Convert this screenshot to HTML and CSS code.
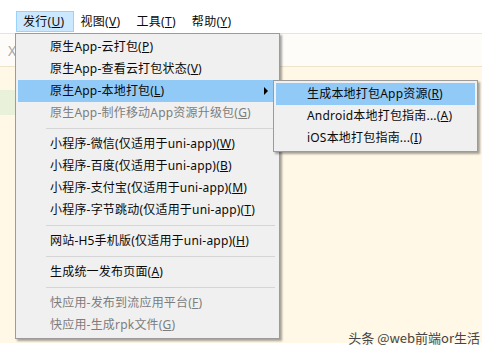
FILE: index.html
```html
<!DOCTYPE html>
<html lang="zh-CN">
<head>
<meta charset="utf-8">
<title>HBuilderX 发行菜单</title>
<link rel="stylesheet" href="styles.css">
</head>
<body>
<div class="menubar">
  <span class="mb-item active">发行(<u>U</u>)</span>
  <span class="mb-item">视图(<u>V</u>)</span>
  <span class="mb-item">工具(<u>T</u>)</span>
  <span class="mb-item">帮助(<u>Y</u>)</span>
</div>
<div class="workspace">
  <div class="tabbar"><span class="tab-close">X</span></div>
  <div class="editor">
    <div class="gutter"><div class="gutter-hl"></div></div>
    <div class="watermark">头条 @web前端or生活</div>
  </div>

  <div class="menu">
    <div class="item">原生App-云打包(<u>P</u>)</div>
    <div class="item">原生App-查看云打包状态(<u>V</u>)</div>
    <div class="item hl">原生App-本地打包(<u>L</u>)<span class="arrow"></span></div>
    <div class="item dis">原生App-制作移动App资源升级包(<u>G</u>)</div>
    <div class="sep"></div>
    <div class="item">小程序-微信(仅适用于uni-app)(<u>W</u>)</div>
    <div class="item">小程序-百度(仅适用于uni-app)(<u>B</u>)</div>
    <div class="item">小程序-支付宝(仅适用于uni-app)(<u>M</u>)</div>
    <div class="item">小程序-字节跳动(仅适用于uni-app)(<u>T</u>)</div>
    <div class="sep"></div>
    <div class="item">网站-H5手机版(仅适用于uni-app)(<u>H</u>)</div>
    <div class="sep"></div>
    <div class="item">生成统一发布页面(<u>A</u>)</div>
    <div class="sep"></div>
    <div class="item dis">快应用-发布到流应用平台(<u>F</u>)</div>
    <div class="item dis">快应用-生成rpk文件(<u>G</u>)</div>
  </div>

  <div class="submenu">
    <div class="item hl">生成本地打包App资源(<u>R</u>)</div>
    <div class="item">Android本地打包指南...(<u>A</u>)</div>
    <div class="item">iOS本地打包指南...(<u>I</u>)</div>
  </div>
</div>
</body>
</html>
```
FILE: styles.css
```css
html, body {
  margin: 0;
  padding: 0;
  background: #ffffff;
}
body {
  width: 491px;
  height: 355px;
  overflow: hidden;
  font-family: "Noto Sans", "Noto Sans CJK SC", sans-serif;
  font-size: 12px;
  color: #0a0a0a;
}
u {
  text-decoration: underline;
  text-underline-offset: 1px;
}

/* menubar */
.menubar {
  height: 33px;
  box-sizing: border-box;
  padding: 11px 0 0 16px;
  display: flex;
  align-items: flex-start;
  letter-spacing: 0.3px;
}
.mb-item {
  height: 21px;
  box-sizing: border-box;
  border: 1px solid transparent;
  padding: 0 8px 0 6px;
  line-height: 19px;
  white-space: nowrap;
}
.mb-item.active {
  background: #cce8ff;
  border-color: #99d1ff;
}

/* background workspace */
.workspace {
  position: relative;
  width: 482px;
  height: 310px;
  box-sizing: border-box;
  border-top: 1px solid #e4e4e4;
  display: flex;
  flex-direction: column;
}
.tabbar {
  height: 33px;
  box-sizing: border-box;
  background: #fdfcf8;
  border-bottom: 1px solid #ece3c8;
  padding-left: 8px;
  line-height: 34px;
}
.tab-close {
  color: #a8a8a8;
  font-size: 14px;
}
.editor {
  flex: 1;
  background: #fff8e6;
  display: flex;
}
.gutter {
  width: 15px;
  padding-top: 23px;
}
.gutter-hl {
  height: 25px;
  background: #e9f1da;
}
.watermark {
  position: absolute;
  right: 2px;
  bottom: -2px;
  font-family: "Noto Sans CJK SC", sans-serif;
  font-size: 13px;
  line-height: 14px;
  color: #444;
  white-space: nowrap;
}

/* menus (overlay) */
.menu, .submenu {
  position: absolute;
  box-sizing: border-box;
  background: #f0f0f0;
  border: 1px solid #9b9b9b;
  padding: 2px;
  box-shadow: 2px 2px 2px rgba(0, 0, 0, 0.35);
  letter-spacing: 0.2px;
}
.menu {
  left: 15px;
  top: -1px;
  width: 265px;
}
.submenu {
  left: 273px;
  top: 46px;
  width: 205px;
}
.item {
  position: relative;
  height: 22px;
  line-height: 22px;
  padding-left: 32px;
  white-space: nowrap;
}
.submenu .item {
  padding-left: 31px;
}
.item.hl {
  background: #91c9f7;
}
.item.dis {
  color: #7d7d7d;
}
.arrow {
  position: absolute;
  right: 9px;
  top: 7px;
  width: 0;
  height: 0;
  border-left: 4px solid #000;
  border-top: 4px solid transparent;
  border-bottom: 4px solid transparent;
}
.sep {
  height: 9px;
  margin: 0 2px 0 28px;
  position: relative;
}
.sep::before {
  content: "";
  position: absolute;
  left: 0;
  right: 0;
  top: 4px;
  height: 1px;
  background: #d5d5d5;
}
```
